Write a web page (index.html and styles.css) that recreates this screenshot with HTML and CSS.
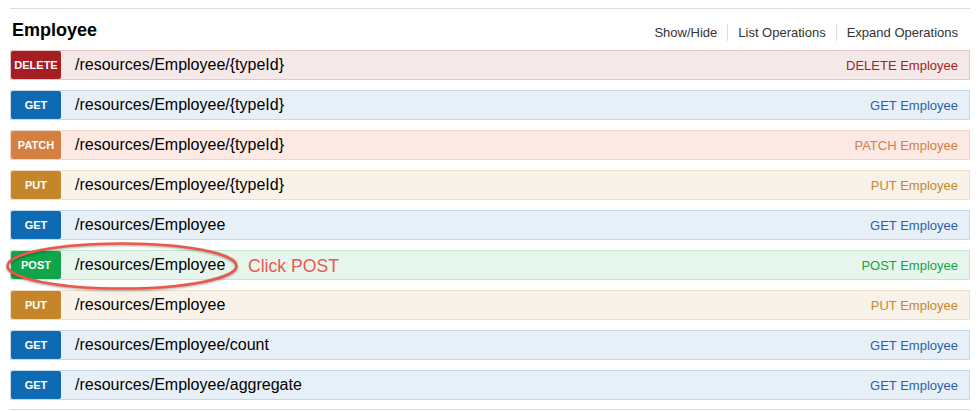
FILE: index.html
```html
<!DOCTYPE html>
<html>
<head>
<meta charset="utf-8">
<link rel="stylesheet" href="styles.css">
</head>
<body>
<div class="page">
  <div class="resource">
    <div class="heading">
      <h2 class="title">Employee</h2>
      <ul class="options">
        <li class="opt">Show/Hide</li>
        <li class="opt">List Operations</li>
        <li class="opt">Expand Operations</li>
      </ul>
    </div>
    <div class="ops">
      <div class="op delete"><span class="verb">DELETE</span><span class="path">/resources/Employee/{typeId}</span><span class="summary">DELETE Employee</span></div>
      <div class="op get"><span class="verb">GET</span><span class="path">/resources/Employee/{typeId}</span><span class="summary">GET Employee</span></div>
      <div class="op patch"><span class="verb">PATCH</span><span class="path">/resources/Employee/{typeId}</span><span class="summary">PATCH Employee</span></div>
      <div class="op put"><span class="verb">PUT</span><span class="path">/resources/Employee/{typeId}</span><span class="summary">PUT Employee</span></div>
      <div class="op get"><span class="verb">GET</span><span class="path">/resources/Employee</span><span class="summary">GET Employee</span></div>
      <div class="op post"><span class="verb">POST</span><span class="path">/resources/Employee</span><span class="summary">POST Employee</span></div>
      <div class="op put"><span class="verb">PUT</span><span class="path">/resources/Employee</span><span class="summary">PUT Employee</span></div>
      <div class="op get"><span class="verb">GET</span><span class="path">/resources/Employee/count</span><span class="summary">GET Employee</span></div>
      <div class="op get"><span class="verb">GET</span><span class="path">/resources/Employee/aggregate</span><span class="summary">GET Employee</span></div>
    </div>
  </div>
  <svg class="annot-ring" width="980" height="411" viewBox="0 0 980 411">
    <ellipse cx="122" cy="266" rx="114.5" ry="22.5" fill="none" stroke="#e8584c" stroke-width="2.6"/>
  </svg>
  <span class="annot-text">Click POST</span>
</div>
</body>
</html>
```

FILE: styles.css
```css
* { box-sizing: border-box; }
html, body { margin: 0; padding: 0; background: #fff; }
body {
  font-family: "Liberation Sans", Arial, Helvetica, sans-serif;
  color: #000;
  width: 980px;
  height: 411px;
  overflow: hidden;
}
.page { position: relative; width: 980px; height: 411px; padding: 8px 10px 0 10px; }
.resource { border-top: 1px solid #ddd; width: 960px; }
.heading { display: flex; justify-content: space-between; align-items: flex-start; height: 41px; }
.title {
  margin: 0;
  padding: 10px 0 0 2px;
  font-size: 18px;
  line-height: 22px;
  font-weight: bold;
  color: #000;
}
.options { list-style: none; margin: 15px 0 0 0; padding: 0 12px 0 0; display: flex; }
.opt {
  font-size: 13px;
  line-height: 17px;
  color: #333;
  padding: 0 10px;
  border-left: 1px solid #ddd;
}
.opt:first-child { border-left: none; }
.opt:last-child { padding-right: 0; }
.ops { display: flex; flex-direction: column; gap: 10px; padding-bottom: 9px; border-bottom: 1px solid #ddd; }
.op {
  display: flex;
  align-items: center;
  height: 30px;
  border: 1px solid;
}
.verb {
  width: 50px;
  height: 28px;
  border-radius: 2px;
  color: #fff;
  font-size: 11px;
  font-weight: bold;
  display: flex;
  align-items: center;
  justify-content: center;
  flex: none;
}
.path { margin-left: 14px; font-size: 16px; color: #000; }
.summary { margin-left: auto; padding-right: 11px; font-size: 13px; }

.delete { background: #f5e8e8; border-color: #e8c6c7; }
.delete .verb { background: #a41e22; }
.delete .summary { color: #a41e22; }
.get { background: #e7f0f7; border-color: #c3d9ec; }
.get .verb { background: #0f6ab4; }
.get .summary { color: #2c5fa8; }
.patch { background: #fce9e3; border-color: #f5d5c3; }
.patch .verb { background: #d38042; }
.patch .summary { color: #d38042; }
.put { background: #f9f2e9; border-color: #f0e0ca; }
.put .verb { background: #c5862b; }
.put .summary { color: #c5862b; }
.post { background: #e7f6ec; border-color: #c3e8d1; }
.post .verb { background: #10a54a; }
.post .summary { color: #10a54a; }

.annot-ring {
  position: absolute;
  left: 0;
  top: 0;
  pointer-events: none;
  filter: drop-shadow(0 1px 1.2px rgba(0,0,0,0.35));
}
.annot-text {
  position: absolute;
  left: 248px;
  top: 256px;
  font-size: 17.6px;
  line-height: 20px;
  color: #ea5a4e;
}
```
